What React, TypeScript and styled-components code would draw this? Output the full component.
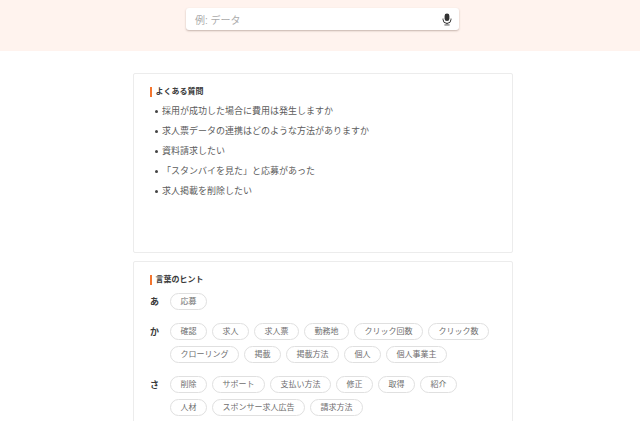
import React from "react";
import styled, { createGlobalStyle } from "styled-components";

const GlobalStyle = createGlobalStyle`
  html, body {
    margin: 0;
    padding: 0;
    height: 421px;
    overflow: hidden;
    background: #fff;
    font-family: "Liberation Sans", "Noto Sans CJK JP", sans-serif;
  }
`;

const Hero = styled.div`
  height: 51px;
  background-color: #fff3ee;
  padding: 8px 0 0 5px;
  box-sizing: border-box;
`;

const SearchBox = styled.div`
  width: 273px;
  height: 22px;
  margin: 0 auto;
  padding: 0 7px 0 9px;
  box-sizing: border-box;
  background: #fff;
  border-radius: 3px;
  box-shadow: 0 1px 2px rgba(90, 60, 50, 0.35);
  display: flex;
  align-items: center;
  justify-content: space-between;
`;

const Placeholder = styled.span`
  font-size: 10px;
  color: #aaa;
`;

const Content = styled.div`
  padding-left: 6px;
`;

const Main = styled.div`
  width: 380px;
  margin: 22px auto 0;
  display: flex;
  flex-direction: column;
  gap: 8px;
`;

const Card = styled.section<{ $height?: number }>`
  border: 1px solid #ececec;
  border-radius: 2px;
  box-sizing: border-box;
  padding: 13px 16px 12px;
  height: ${(p) => (p.$height ? `${p.$height}px` : "auto")};
`;

const Title = styled.h2`
  margin: 0;
  border-left: 2.5px solid #f4752e;
  padding-left: 3.5px;
  height: 10px;
  line-height: 10px;
  font-size: 8px;
  font-weight: 700;
  color: #3a3a3a;
`;

const FaqList = styled.ul`
  list-style: none;
  margin: 4px 0 0;
  padding: 0;
`;

const FaqItem = styled.li`
  height: 20px;
  line-height: 20px;
  padding-left: 12px;
  position: relative;
  font-size: 9px;
  color: #5c5c5c;

  &::before {
    content: "";
    position: absolute;
    left: 5px;
    top: 9px;
    width: 3px;
    height: 3px;
    border-radius: 50%;
    background: #444;
  }
`;

const HintGroup = styled.div`
  display: flex;
  margin-top: 8px;

  & + & {
    margin-top: 13px;
  }
`;

const Kana = styled.div`
  width: 20px;
  height: 17px;
  flex: none;
  font-size: 9px;
  font-weight: 700;
  line-height: 18px;
  color: #3a3a3a;
`;

const Chips = styled.div`
  display: flex;
  flex-wrap: wrap;
  gap: 6px 5px;
`;

const Chip = styled.span`
  height: 17px;
  line-height: 15px;
  padding: 0 9.5px;
  box-sizing: border-box;
  border: 1px solid #e0e0e0;
  border-radius: 9px;
  font-size: 8px;
  color: #6e6e6e;
  white-space: nowrap;
`;

const faqs = [
  "採用が成功した場合に費用は発生しますか",
  "求人票データの連携はどのような方法がありますか",
  "資料請求したい",
  "「スタンバイを見た」と応募があった",
  "求人掲載を削除したい",
];

const hints = [
  { kana: "あ", words: ["応募"] },
  {
    kana: "か",
    words: ["確認", "求人", "求人票", "勤務地", "クリック回数", "クリック数", "クローリング", "掲載", "掲載方法", "個人", "個人事業主"],
  },
  {
    kana: "さ",
    words: ["削除", "サポート", "支払い方法", "修正", "取得", "紹介", "人材", "スポンサー求人広告", "請求方法"],
  },
];

const MicIcon = () => (
  <svg width="10" height="13" viewBox="0 0 10 13" aria-hidden="true">
    <rect x="2.6" y="0.5" width="4.8" height="7.6" rx="2.4" fill="#333" />
    <path d="M1 5.6v.8a4 4 0 0 0 8 0v-.8" fill="none" stroke="#333" strokeWidth="1" />
    <rect x="4.5" y="10" width="1" height="1.2" fill="#333" />
    <rect x="2.4" y="11.4" width="5.2" height="1.1" fill="#666" />
  </svg>
);

const App = () => {
  return (
    <>
      <GlobalStyle />
      <Hero>
        <SearchBox>
          <Placeholder>例: データ</Placeholder>
          <MicIcon />
        </SearchBox>
      </Hero>
      <Content>
        <Main>
          <Card $height={180}>
            <Title>よくある質問</Title>
            <FaqList>
              {faqs.map((faq) => (
                <FaqItem key={faq}>{faq}</FaqItem>
              ))}
            </FaqList>
          </Card>
          <Card>
            <Title>言葉のヒント</Title>
            {hints.map((group) => (
              <HintGroup key={group.kana}>
                <Kana>{group.kana}</Kana>
                <Chips>
                  {group.words.map((word) => (
                    <Chip key={word}>{word}</Chip>
                  ))}
                </Chips>
              </HintGroup>
            ))}
          </Card>
        </Main>
      </Content>
    </>
  );
};

export default App;
